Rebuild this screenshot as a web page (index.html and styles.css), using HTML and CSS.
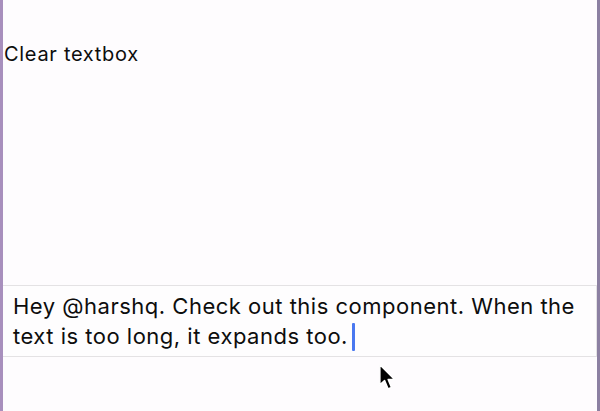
FILE: index.html
```html
<!DOCTYPE html>
<html>
<head>
<meta charset="utf-8">
<link rel="stylesheet" href="styles.css">
</head>
<body>
<div class="frame">
  <div class="clear-btn">Clear textbox</div>
  <div class="spacer"></div>
  <div class="textbox">
    <span class="text">Hey @harshq. Check out this component. When the text is too long, it expands too.</span><span class="caret"></span>
  </div>
  <div class="bottom">
    <svg class="pointer" width="21" height="30" viewBox="0 0 18 26">
      <path d="M1.5 1.5 L1.5 19 L5.6 15.2 L8.6 22.4 L11.6 21.1 L8.7 14.2 L14.3 14.2 Z" fill="#000" stroke="#fff" stroke-width="1.3" stroke-linejoin="round"/>
    </svg>
  </div>
</div>
</body>
</html>
```

FILE: styles.css
```css
html, body {
  margin: 0;
  padding: 0;
  width: 600px;
  height: 411px;
  overflow: hidden;
}
body {
  font-family: Inter, "Liberation Sans", sans-serif;
  color: #0d0d0d;
}
.frame {
  box-sizing: border-box;
  width: 600px;
  height: 411px;
  background: #fefcfe;
  border-left: 3px solid #a88fbd;
  border-right: 3px solid #8c80a2;
  display: flex;
  flex-direction: column;
}
.clear-btn {
  margin-top: 42px;
  padding-left: 1px;
  font-size: 20px;
  line-height: 24px;
  letter-spacing: 0.7px;
}
.spacer {
  flex: 1;
}
.textbox {
  border-top: 1px solid #e4e2e4;
  border-bottom: 1px solid #e4e2e4;
  border-right: 1px solid #e4e2e4;
  padding: 5px 10px 5px 10px;
  font-size: 22px;
  line-height: 30px;
  letter-spacing: 0.5px;
  background: #fefdfe;
}
.caret {
  display: inline-block;
  width: 3px;
  height: 28px;
  background: #4a78f0;
  border-radius: 1px;
  vertical-align: -7px;
  margin-left: 4px;
}
.bottom {
  height: 54px;
  position: relative;
}
.pointer {
  position: absolute;
  left: 375px;
  top: 6px;
}
```
